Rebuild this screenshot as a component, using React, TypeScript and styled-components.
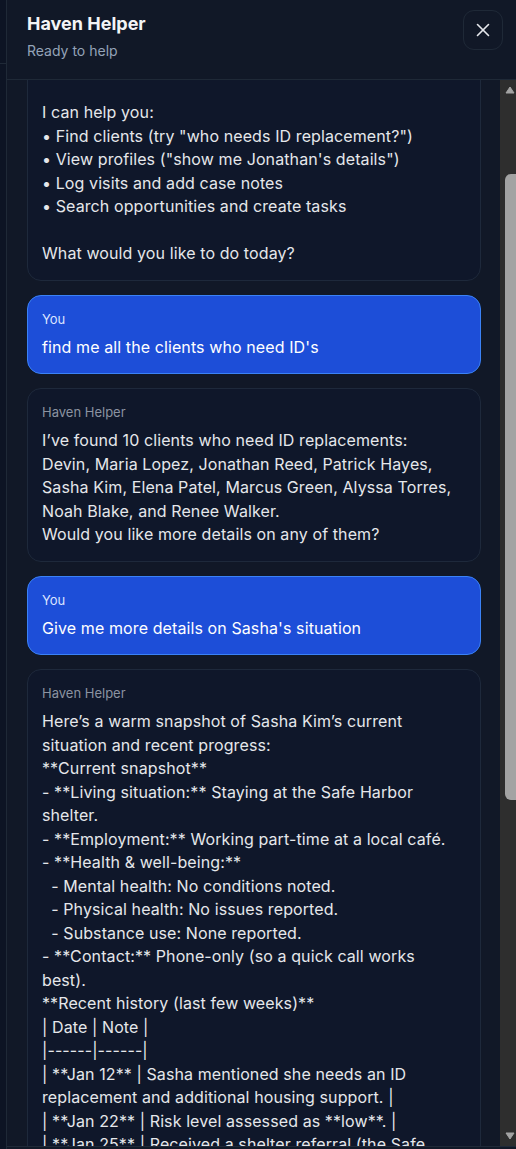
import React, { useLayoutEffect, useRef, useState } from "react";
import styled, { createGlobalStyle } from "styled-components";
import { X } from "lucide-react";

const Global = createGlobalStyle`
  html, body {
    margin: 0;
    padding: 0;
    height: 100%;
    overflow: hidden;
    background: #0c1322;
  }
  body {
    font-family: Inter, "Noto Sans", sans-serif;
  }
  * { box-sizing: border-box; }
`;

const Page = styled.div`
  display: flex;
  height: 1149px;
  overflow: hidden;
`;

const Backdrop = styled.div`
  flex: 0 0 6px;
  background: #0d1424;
`;

const BackdropBar = styled.div`
  height: 64px;
  border-bottom: 1px solid #1f2937;
`;

const Panel = styled.aside`
  flex: 1;
  display: flex;
  flex-direction: column;
  background: #111827;
  border-left: 1px solid #1f2937;
  min-width: 0;
`;

const Header = styled.header`
  flex: 0 0 80px;
  display: flex;
  justify-content: space-between;
  align-items: flex-start;
  padding: 10px 13px 0 20px;
  border-bottom: 1px solid #1f2937;
`;

const TitleBlock = styled.div`
  display: flex;
  flex-direction: column;
  gap: 7px;
  padding-top: 3px;
`;

const Title = styled.h1`
  margin: 0;
  font-size: 18px;
  line-height: 22px;
  font-weight: 700;
  color: #f3f4f6;
`;

const Subtitle = styled.div`
  font-size: 14px;
  line-height: 18px;
  color: #94a3b8;
`;

const CloseButton = styled.button`
  width: 40px;
  height: 40px;
  display: flex;
  align-items: center;
  justify-content: center;
  background: transparent;
  border: 1px solid #1f2937;
  border-radius: 11px;
  color: #e5e7eb;
  padding: 0;
  cursor: pointer;
`;

const MessagesFrame = styled.div`
  flex: 0 0 1066px;
  height: 1066px;
  display: flex;
  min-height: 0;
`;

const Viewport = styled.div`
  flex: 1;
  min-width: 0;
  overflow: hidden;
  padding: 20px 19px 20px 20px;
  display: flex;
  flex-direction: column;
  gap: 14px;
`;

const ScrollBar = styled.div`
  flex: 0 0 16px;
  display: flex;
  flex-direction: column;
  background: #2e2e2e;
`;

const ArrowButton = styled.div<{ $down?: boolean }>`
  flex: 0 0 15px;
  display: flex;
  justify-content: center;
  align-items: ${(p) => (p.$down ? "flex-start" : "flex-end")};
  padding: ${(p) => (p.$down ? "1px 0 0 3px" : "0 0 1px 3px")};
`;

const Rail = styled.div`
  flex: 1;
  min-height: 0;
  display: flex;
  flex-direction: column;
  align-items: flex-end;
`;

const Thumb = styled.div`
  width: 11px;
  flex: none;
  background: #a3a3a3;
  border-radius: 6px 0 0 6px;
`;

const Bubble = styled.div<{ $user?: boolean }>`
  flex: none;
  border-radius: 14px;
  padding: 14px 25px 14px 14px;
  border: 1px solid ${(p) => (p.$user ? "#3b82f6" : "#1e293b")};
  background: ${(p) => (p.$user ? "#1d4ed8" : "#0f172a")};
  display: flex;
  flex-direction: column;
  gap: 8px;
`;

const Sender = styled.div<{ $user?: boolean }>`
  font-size: 13px;
  line-height: 18px;
  color: ${(p) => (p.$user ? "#dbe4ff" : "#8b93a1")};
`;

const Body = styled.div<{ $user?: boolean }>`
  font-size: 16px;
  letter-spacing: 0.1px;
  line-height: 23.5px;
  color: ${(p) => (p.$user ? "#ffffff" : "#e5e7eb")};
  white-space: pre-wrap;
  word-wrap: break-word;
`;

const Footer = styled.div`
  flex: none;
  border-top: 1px solid #1f2937;
  padding: 14px 20px;
`;

const InputBox = styled.div`
  height: 44px;
  border-radius: 12px;
  border: 1px solid #1f2937;
  background: #0f172a;
`;

type Msg = { user: boolean; text: string };

const messages: Msg[] = [
  {
    user: false,
    text:
      "Hi there! I’m Haven Helper, your friendly assistant for client care here at the shelter. I’m ready to help you get through today’s case work.\n\nI can help you:\n• Find clients (try \"who needs ID replacement?\")\n• View profiles (\"show me Jonathan's details\")\n• Log visits and add case notes\n• Search opportunities and create tasks\n\nWhat would you like to do today?",
  },
  { user: true, text: "find me all the clients who need ID's" },
  {
    user: false,
    text:
      "I’ve found 10 clients who need ID replacements: Devin, Maria Lopez, Jonathan Reed, Patrick Hayes, Sasha Kim, Elena Patel, Marcus Green, Alyssa Torres, Noah Blake, and Renee Walker.\nWould you like more details on any of them?",
  },
  { user: true, text: "Give me more details on Sasha's situation" },
  {
    user: false,
    text:
      "Here’s a warm snapshot of Sasha Kim’s current situation and recent progress:\n**Current snapshot**\n- **Living situation:** Staying at the Safe Harbor shelter.\n- **Employment:** Working part-time at a local café.\n- **Health & well-being:**\n  - Mental health: No conditions noted.\n  - Physical health: No issues reported.\n  - Substance use: None reported.\n- **Contact:** Phone-only (so a quick call works best).\n**Recent history (last few weeks)**\n| Date | Note |\n|------|------|\n| **Jan 12** | Sasha mentioned she needs an ID replacement and additional housing support. |\n| **Jan 22** | Risk level assessed as **low**. |\n| **Jan 25** | Received a shelter referral (the Safe Harbor placement). |\n| **Feb 3** | Started part-time work at a local café. |\n| **Feb 10** | Follow-up visit: ID application in progress. |\n**What’s going well**\n- Stable shelter placement and steady part-time income.\n- Low risk level and no health concerns reported.\n**Open needs**\n- ID replacement (documents still pending).\n- Longer-term housing support.\n- A mailing address for benefit letters.\n**Suggested next steps**\n1. Give Sasha a quick call to check on her ID paperwork.\n2. Share housing program options that fit her schedule.\n3. Log the visit and add a case note once you’ve connected.\n4. Set a reminder to follow up next week.\nWould you like me to create a follow-up task for Sasha?",
  },
];

const SCROLL_TOP = 134;

function Arrow({ down }: { down?: boolean }) {
  return (
    <svg width="10" height="8" viewBox="0 0 10 8" aria-hidden="true">
      <path
        d={down ? "M1 1 H9 L5 7 Z" : "M5 1 L9 7 H1 Z"}
        fill="#a3a3a3"
        stroke="#a3a3a3"
        strokeWidth="1"
        strokeLinejoin="round"
      />
    </svg>
  );
}

export default function App() {
  const listRef = useRef<HTMLDivElement>(null);
  const [thumb, setThumb] = useState({ top: 0, height: 0 });

  useLayoutEffect(() => {
    const el = listRef.current;
    if (!el) return;
    el.scrollTop = SCROLL_TOP;
    const rail = el.clientHeight - 30;
    const total = el.scrollHeight;
    const visible = el.clientHeight;
    const h = Math.max(20, (rail * visible) / total);
    const maxScroll = Math.max(1, total - visible);
    const top = (el.scrollTop / maxScroll) * (rail - h);
    setThumb({ top, height: h });
  }, []);

  return (
    <>
      <Global />
      <Page>
        <Backdrop>
          <BackdropBar />
        </Backdrop>
        <Panel>
          <Header>
            <TitleBlock>
              <Title>Haven Helper</Title>
              <Subtitle>Ready to help</Subtitle>
            </TitleBlock>
            <CloseButton aria-label="Close">
              <X size={22} strokeWidth={1.75} />
            </CloseButton>
          </Header>
          <MessagesFrame>
            <Viewport ref={listRef}>
              {messages.map((m, i) => (
                <Bubble key={i} $user={m.user}>
                  <Sender $user={m.user}>{m.user ? "You" : "Haven Helper"}</Sender>
                  <Body $user={m.user}>{m.text}</Body>
                </Bubble>
              ))}
            </Viewport>
            <ScrollBar aria-hidden="true">
              <ArrowButton>
                <Arrow />
              </ArrowButton>
              <Rail>
                <Thumb style={{ marginTop: thumb.top, height: thumb.height }} />
              </Rail>
              <ArrowButton $down>
                <Arrow down />
              </ArrowButton>
            </ScrollBar>
          </MessagesFrame>
          <Footer>
            <InputBox />
          </Footer>
        </Panel>
      </Page>
    </>
  );
}
